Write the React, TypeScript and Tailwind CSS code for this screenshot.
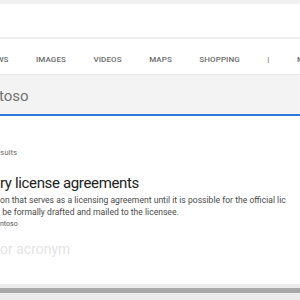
import React from "react";

const tabs = ["NEWS", "IMAGES", "VIDEOS", "MAPS", "SHOPPING", "|", "MORE"];

export default function App() {
  return (
    <div
      className="w-[300px] h-[300px] overflow-hidden bg-white flex flex-col"
      style={{ fontFamily: "Roboto, 'Liberation Sans', sans-serif" }}
    >
      {/* top strip + search bar */}
      <div className="h-[4px] bg-[#f1f1f1] shrink-0" />
      <div className="h-[33px] bg-white shrink-0" />
      <div className="h-[2px] bg-[#efefef] shrink-0" />

      {/* tabs */}
      <div className="h-[36px] shrink-0 flex items-center gap-[27.5px] pt-[6px] ml-[-14px] border-b border-[#e6e6e6] shadow-[0_1px_2px_rgba(0,0,0,0.06)]">
        {tabs.map((t) => (
          <span key={t} className="shrink-0 text-[8px] font-medium text-[#6b6b6b] tracking-[0.1px]">
            {t}
          </span>
        ))}
      </div>

      {/* query box */}
      <div className="h-[41px] shrink-0 bg-[#f3f3f3] border-b-2 border-[#2a7be0] flex items-center">
        <span className="ml-[-1px] mt-[4px] text-[15px] text-[#727272]">toso</span>
      </div>

      {/* results */}
      <div className="flex-1 flex flex-col">
        <div className="mt-[32px] text-[8px] text-[#707070] leading-[10px]">sults</div>
        <div className="mt-[16px] text-[15px] text-[#222] leading-[18px] tracking-[-0.35px]">ry license agreements</div>
        <div className="mt-[2px] text-[8.6px] text-[#4a4a4a] leading-[12px] whitespace-nowrap">
          on that serves as a licensing agreement until it is possible for the official lic
        </div>
        <div className="text-[8.6px] text-[#4a4a4a] leading-[12px] whitespace-nowrap">
          &nbsp;be formally drafted and mailed to the licensee.
        </div>
        <div className="mt-[1px] text-[7px] text-[#555] leading-[10px]">ntoso</div>
        <div className="mt-[12px] text-[14px] text-[#e4e4e4] leading-[16px]">or acronym</div>
        <div className="flex-1" />
        <div className="h-[4px] bg-[#ededed] shrink-0" />
        <div className="h-[5px] bg-[#a8a8a8] shrink-0" />
        <div className="h-[7px] bg-[#ececec] shrink-0" />
      </div>
    </div>
  );
}
